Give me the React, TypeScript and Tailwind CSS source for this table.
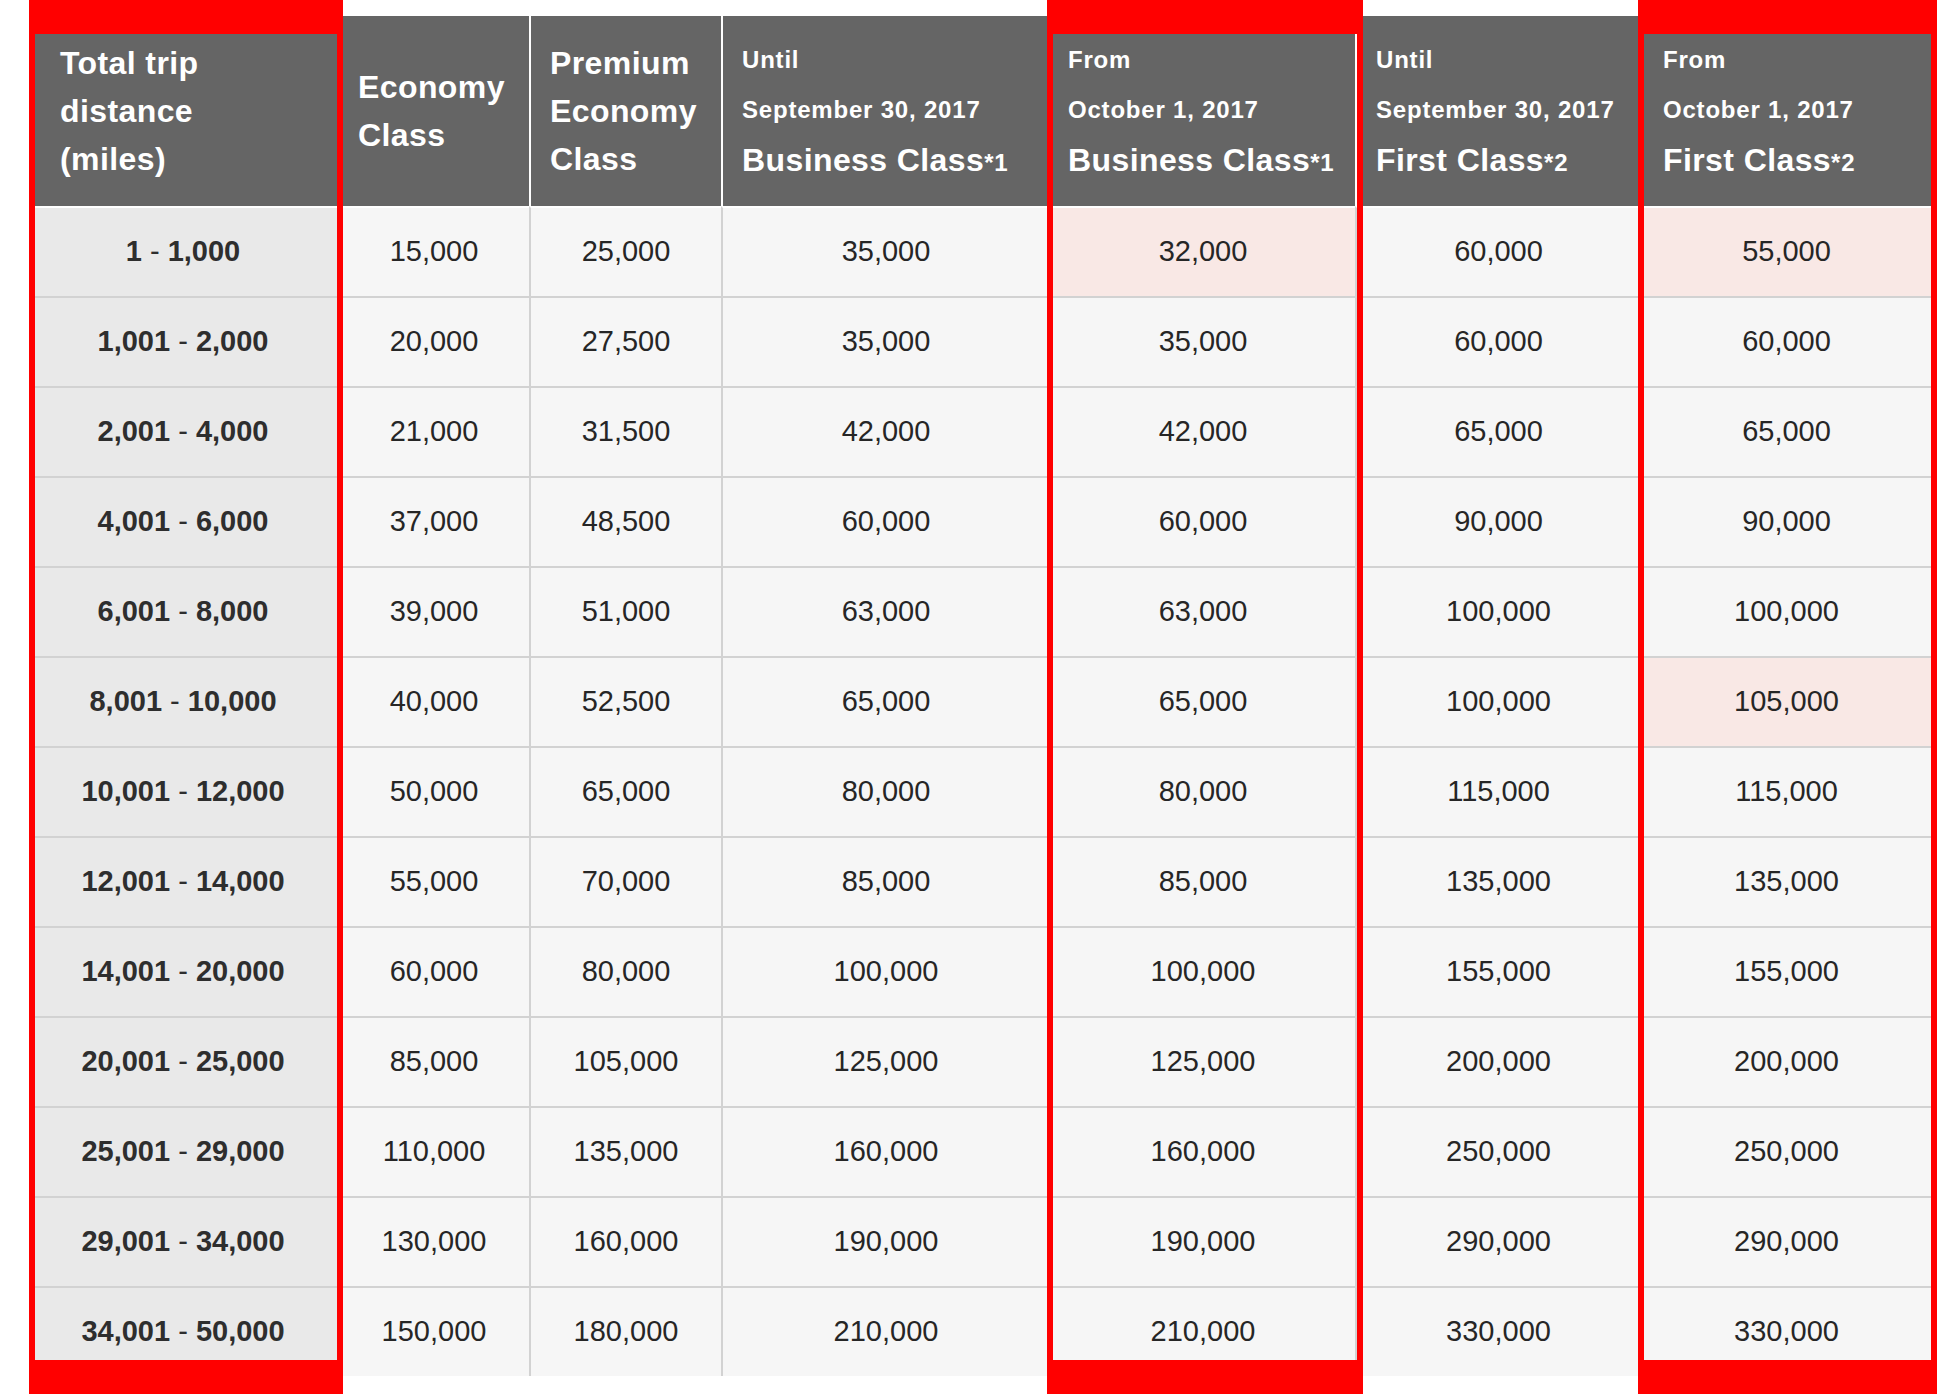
const rows: string[][] = [
  ['1', '1,000', '15,000', '25,000', '35,000', '32,000', '60,000', '55,000'],
  ['1,001', '2,000', '20,000', '27,500', '35,000', '35,000', '60,000', '60,000'],
  ['2,001', '4,000', '21,000', '31,500', '42,000', '42,000', '65,000', '65,000'],
  ['4,001', '6,000', '37,000', '48,500', '60,000', '60,000', '90,000', '90,000'],
  ['6,001', '8,000', '39,000', '51,000', '63,000', '63,000', '100,000', '100,000'],
  ['8,001', '10,000', '40,000', '52,500', '65,000', '65,000', '100,000', '105,000'],
  ['10,001', '12,000', '50,000', '65,000', '80,000', '80,000', '115,000', '115,000'],
  ['12,001', '14,000', '55,000', '70,000', '85,000', '85,000', '135,000', '135,000'],
  ['14,001', '20,000', '60,000', '80,000', '100,000', '100,000', '155,000', '155,000'],
  ['20,001', '25,000', '85,000', '105,000', '125,000', '125,000', '200,000', '200,000'],
  ['25,001', '29,000', '110,000', '135,000', '160,000', '160,000', '250,000', '250,000'],
  ['29,001', '34,000', '130,000', '160,000', '190,000', '190,000', '290,000', '290,000'],
  ['34,001', '50,000', '150,000', '180,000', '210,000', '210,000', '330,000', '330,000'],
]

// [row, value column] cells with the pink fill
const highlighted = ['0-3', '0-5', '5-5']

function DateHeader({ when, date, cls, note }: { when: string; date: string; cls: string; note: string }) {
  return (
    <div className="flex flex-col leading-[50px]">
      <span className="text-[24px] tracking-[0.8px]">{when}</span>
      <span className="text-[24px] tracking-[0.8px]">{date}</span>
      <span className="text-[32px] tracking-[0.4px]">
        {cls}
        <span className="text-[24px] tracking-[0.8px]">{note}</span>
      </span>
    </div>
  )
}

function RedBox({ className }: { className: string }) {
  return (
    <div
      className={`absolute top-0 h-[1394px] border-x-[6px] border-y-[34px] border-[#ff0000] pointer-events-none ${className}`}
    />
  )
}

export default function App() {
  return (
    <div className="relative w-[1958px] h-[1394px] overflow-hidden bg-white font-['Liberation_Sans',Arial,sans-serif]">
      <div className="pl-[29px] pt-[16px]">
        <div className="grid grid-cols-[308px_192px_192px_328px_306px_285px_291px] w-[1902px]">
          {/* header */}
          <div className="h-[190px] bg-[#656565] text-white font-bold flex items-center pl-[31px] text-[32px] tracking-[0.4px] leading-[48px]">
            <div>
              Total trip
              <br />
              distance
              <br />
              (miles)
            </div>
          </div>
          <div className="h-[190px] bg-[#656565] text-white font-bold flex items-center border-l-2 border-white pl-[19px] text-[32px] tracking-[0.4px] leading-[48px]">
            <div>
              Economy
              <br />
              Class
            </div>
          </div>
          <div className="h-[190px] bg-[#656565] text-white font-bold flex items-center border-l-2 border-white pl-[19px] text-[32px] tracking-[0.4px] leading-[48px]">
            <div>
              Premium
              <br />
              Economy
              <br />
              Class
            </div>
          </div>
          <div className="h-[190px] bg-[#656565] text-white font-bold flex items-center border-l-2 border-white pl-[19px]">
            <DateHeader when="Until" date="September 30, 2017" cls="Business Class" note="*1" />
          </div>
          <div className="h-[190px] bg-[#656565] text-white font-bold flex items-center border-l-2 border-white pl-[17px]">
            <DateHeader when="From" date="October 1, 2017" cls="Business Class" note="*1" />
          </div>
          <div className="h-[190px] bg-[#656565] text-white font-bold flex items-center border-l-2 border-white pl-[19px]">
            <DateHeader when="Until" date="September 30, 2017" cls="First Class" note="*2" />
          </div>
          <div className="h-[190px] bg-[#656565] text-white font-bold flex items-center border-l-2 border-white pl-[21px]">
            <DateHeader when="From" date="October 1, 2017" cls="First Class" note="*2" />
          </div>

          {/* body */}
          {rows.map((r, i) => {
            const top = i === 0 ? 'border-t-2 border-t-white' : 'border-t-2 border-t-[#d2d2d2]'
            return [
              <div
                key={`${i}-d`}
                className={`h-[90px] ${top} bg-[#e9e9e9] flex items-center justify-center text-[29px] font-bold text-[#2e2e2e]`}
              >
                {r[0]}
                <span className="font-normal">&nbsp;-&nbsp;</span>
                {r[1]}
              </div>,
              ...r.slice(2).map((v, j) => (
                <div
                  key={`${i}-${j}`}
                  className={`h-[90px] ${top} border-l-2 border-l-[#d2d2d2] flex items-center justify-center text-[29px] text-[#262626] ${
                    highlighted.includes(`${i}-${j}`) ? 'bg-[#f9e8e5]' : 'bg-[#f6f6f6]'
                  }`}
                >
                  {v}
                </div>
              )),
            ]
          })}
        </div>
      </div>

      {/* red markers drawn over the table */}
      <RedBox className="left-[29px] w-[314px]" />
      <RedBox className="left-[1047px] w-[316px]" />
      <RedBox className="left-[1638px] w-[299px]" />
    </div>
  )
}
